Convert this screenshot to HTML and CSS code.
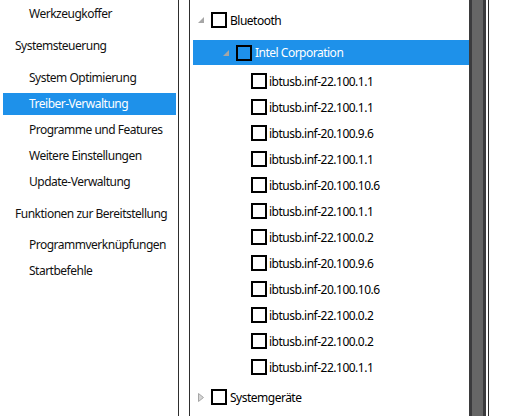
FILE: index.html
```html
<!DOCTYPE html>
<html lang="de">
<head>
<meta charset="utf-8">
<title>Treiber-Verwaltung</title>
<link rel="stylesheet" href="styles.css">
</head>
<body>
<div class="app">
  <nav class="sidebar">
    <div class="nav-item sub first">Werkzeugkoffer</div>
    <div class="nav-item head">Systemsteuerung</div>
    <div class="nav-item sub">System Optimierung</div>
    <div class="nav-item sub selected">Treiber-Verwaltung</div>
    <div class="nav-item sub">Programme und Features</div>
    <div class="nav-item sub">Weitere Einstellungen</div>
    <div class="nav-item sub">Update-Verwaltung</div>
    <div class="nav-item head last-head">Funktionen zur Bereitstellung</div>
    <div class="nav-item sub">Programmverknüpfungen</div>
    <div class="nav-item sub">Startbefehle</div>
  </nav>
  <div class="splitter"></div>
  <div class="tree-pane">
    <div class="tree">
      <div class="node root">
        <div class="row lvl0">
          <svg class="exp" width="6" height="6" viewBox="0 0 6 6"><polygon points="6,0 6,6 0,6" fill="#a6a6a6"/></svg>
          <span class="cb"></span>
          <span class="label">Bluetooth</span>
        </div>
        <div class="children">
          <div class="node">
            <div class="row lvl1 selected">
              <svg class="exp" width="6" height="6" viewBox="0 0 6 6"><polygon points="6,0 6,6 0,6" fill="#a6a6a6"/></svg>
              <span class="cb"></span>
              <span class="label">Intel Corporation</span>
            </div>
            <div class="leaves">
              <div class="row leaf"><span class="cb"></span><span class="label">ibtusb.inf-22.100.1.1</span></div>
              <div class="row leaf"><span class="cb"></span><span class="label">ibtusb.inf-22.100.1.1</span></div>
              <div class="row leaf"><span class="cb"></span><span class="label">ibtusb.inf-20.100.9.6</span></div>
              <div class="row leaf"><span class="cb"></span><span class="label">ibtusb.inf-22.100.1.1</span></div>
              <div class="row leaf"><span class="cb"></span><span class="label">ibtusb.inf-20.100.10.6</span></div>
              <div class="row leaf"><span class="cb"></span><span class="label">ibtusb.inf-22.100.1.1</span></div>
              <div class="row leaf"><span class="cb"></span><span class="label">ibtusb.inf-22.100.0.2</span></div>
              <div class="row leaf"><span class="cb"></span><span class="label">ibtusb.inf-20.100.9.6</span></div>
              <div class="row leaf"><span class="cb"></span><span class="label">ibtusb.inf-20.100.10.6</span></div>
              <div class="row leaf"><span class="cb"></span><span class="label">ibtusb.inf-22.100.0.2</span></div>
              <div class="row leaf"><span class="cb"></span><span class="label">ibtusb.inf-22.100.0.2</span></div>
              <div class="row leaf"><span class="cb"></span><span class="label">ibtusb.inf-22.100.1.1</span></div>
            </div>
          </div>
        </div>
      </div>
      <div class="node root next-root">
        <div class="row lvl0">
          <svg class="exp" width="6" height="9" viewBox="0 0 6 9"><polygon points="0.5,0.5 5.5,4.5 0.5,8.5" fill="#d6d6d6" stroke="#a6a6a6" stroke-width="1"/></svg>
          <span class="cb"></span>
          <span class="label">Systemgeräte</span>
        </div>
      </div>
    </div>
  </div>
  <div class="scrollbar"><div class="thumb"></div></div>
  <div class="gap"></div>
  <div class="edge"></div>
</div>
</body>
</html>
```

FILE: styles.css
```css
* { box-sizing: border-box; }

html, body {
  margin: 0;
  padding: 0;
  background: #ffffff;
}

body {
  font-family: "Noto Sans", "Open Sans", "Liberation Sans", sans-serif;
  font-size: 12px;
  letter-spacing: -0.5px;
  color: #000000;
}

.app {
  display: flex;
  height: 416px;
  overflow: hidden;
}

/* ---------- sidebar ---------- */
.sidebar {
  width: 178px;
  flex: none;
  display: flex;
  flex-direction: column;
  gap: 4px;
  padding: 3px 2px 0 3px;
}

.nav-item {
  height: 22px;
  line-height: 22px;
  white-space: nowrap;
  color: #111111;
}

.nav-item.sub { padding-left: 26px; }

.nav-item.head {
  padding-left: 12px;
  margin: 6px 0;
}

.nav-item.last-head { margin-bottom: 5px; }

.nav-item.selected {
  background: #1e91ea;
  color: #ffffff;
}

/* ---------- splitter ---------- */
.splitter {
  width: 12px;
  flex: none;
  border-left: 1px solid #2e2e2e;
  border-right: 1px solid #2e2e2e;
}

/* ---------- tree ---------- */
.tree-pane {
  width: 279px;
  flex: none;
  padding: 7px 0 0 3px;
  overflow: hidden;
}

.tree {
  display: flex;
  flex-direction: column;
}

.row {
  display: flex;
  align-items: center;
  height: 26px;
  white-space: nowrap;
}

.row.lvl0 { padding-left: 5px; }
.row.lvl1 { padding-left: 30px; height: 25px; }
.row.leaf { padding-left: 58px; }

.row.selected {
  background: #1e91ea;
  color: #ffffff;
}

.exp {
  display: block;
  flex: none;
  margin-right: 7px;
}

.cb {
  display: block;
  flex: none;
  width: 16px;
  height: 16px;
  border: 2px solid #000000;
  margin-right: 3px;
}

.row.leaf .cb { margin-right: 2px; }

.children { margin-top: 7px; }
.leaves { padding-top: 3px; }
.next-root { margin-top: 4px; }

/* ---------- scrollbar ---------- */
.scrollbar {
  width: 17px;
  flex: none;
  background: #3b3b3d;
  padding: 0 3px;
}

.thumb {
  height: 100%;
  background: #666666;
}

.gap {
  width: 2px;
  flex: none;
}

.edge {
  width: 1px;
  flex: none;
  background: #2e2e2e;
}
```
